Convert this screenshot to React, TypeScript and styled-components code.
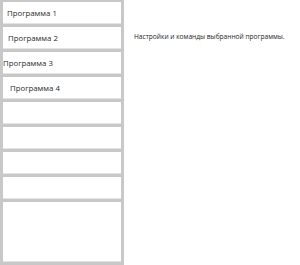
import React from 'react'
import styled, { createGlobalStyle } from 'styled-components'

const GlobalStyle = createGlobalStyle`
  html, body {
    margin: 0;
    padding: 0;
    background: #ffffff;
  }
  body {
    font-family: 'Open Sans', 'Noto Sans', sans-serif;
  }
`

const Layout = styled.div`
  display: flex;
  width: 300px;
  height: 265px;
`

const Sidebar = styled.div`
  display: flex;
  flex-direction: column;
  flex: 0 0 auto;
  gap: 3px;
  width: 118px;
  padding: 2px 3px 3px 3px;
  background: #c8c8c8;
`

const Item = styled.div<{ indent: number; fill?: boolean }>`
  display: flex;
  align-items: center;
  height: 22px;
  flex: ${({ fill }) => (fill ? '1' : '0 0 22px')};
  box-sizing: border-box;
  padding-left: ${({ indent }) => indent}px;
  background: #ffffff;
  border-bottom: 1px solid #e4e4e4;
  font-size: 7.8px;
  color: #2b2b2b;
  white-space: nowrap;
`

const Content = styled.div`
  flex: 1;
  padding: 32px 0 0 10px;
  font-size: 6.6px;
  color: #1e1e1e;
  white-space: nowrap;
`

const programs = [
  { name: 'Программа 1', indent: 4 },
  { name: 'Программа 2', indent: 5 },
  { name: 'Программа 3', indent: 0 },
  { name: 'Программа 4', indent: 7 },
]

export default function App() {
  return (
    <>
      <GlobalStyle />
      <Layout>
        <Sidebar>
          {programs.map(p => (
            <Item key={p.name} indent={p.indent}>
              {p.name}
            </Item>
          ))}
          <Item indent={0} />
          <Item indent={0} />
          <Item indent={0} />
          <Item indent={0} />
          <Item indent={0} fill />
        </Sidebar>
        <Content>Настройки и команды выбранной программы.</Content>
      </Layout>
    </>
  )
}
